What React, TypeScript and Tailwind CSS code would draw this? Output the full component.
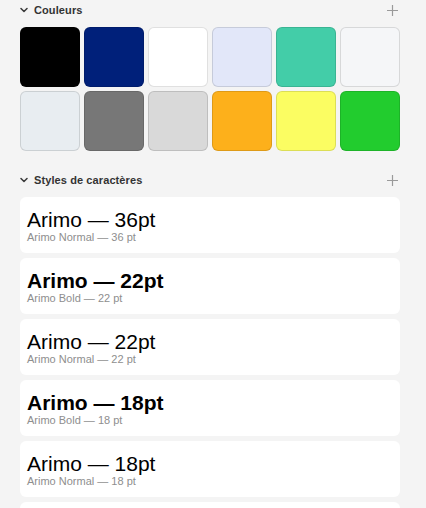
const swatches = [
  "#000000",
  "#00207a",
  "#ffffff",
  "#e2e7f9",
  "#43cda8",
  "#f5f6f8",
  "#e8edf1",
  "#777777",
  "#d9d9d9",
  "#fdb01b",
  "#fbfd62",
  "#22cc2e",
];

const textStyles = [
  { size: 36, bold: false },
  { size: 22, bold: true },
  { size: 22, bold: false },
  { size: 18, bold: true },
  { size: 18, bold: false },
  { size: 16, bold: true },
];

function Chevron() {
  return (
    <svg width="8" height="6" viewBox="0 0 8 6" fill="none">
      <path d="M1 1.5 L4 4.5 L7 1.5" stroke="#3a3a3a" strokeWidth="1.5" strokeLinecap="round" strokeLinejoin="round" />
    </svg>
  );
}

function Plus() {
  return (
    <svg width="11" height="11" viewBox="0 0 11 11" fill="none">
      <path d="M5.5 0 V11 M0 5.5 H11" stroke="#9a9a9a" strokeWidth="1.2" />
    </svg>
  );
}

function SectionHeader({ title }: { title: string }) {
  return (
    <div className="flex h-5 items-center justify-between">
      <div className="flex items-center gap-[6px]">
        <span className="flex w-[8px] justify-center">
          <Chevron />
        </span>
        <span className="text-[11px] leading-none font-bold tracking-[0.1px] text-[#333333]">{title}</span>
      </div>
      <span className="mr-[2px] flex">
        <Plus />
      </span>
    </div>
  );
}

export default function App() {
  return (
    <div
      className="h-[508px] w-[426px] overflow-hidden bg-[#f4f4f4]"
      style={{ fontFamily: "'Liberation Sans', Arial, sans-serif" }}
    >
      <div className="ml-5 w-[380px]">
        <SectionHeader title="Couleurs" />
        <div className="mt-[7px] grid grid-cols-6 gap-1">
          {swatches.map((color, i) => (
            <div
              key={i}
              className="h-[60px] rounded-md border border-black/[0.12]"
              style={{ backgroundColor: color }}
            />
          ))}
        </div>

        <div className="mt-[19px]">
          <SectionHeader title="Styles de caractères" />
        </div>

        <div className="mt-[7px] flex flex-col gap-[5px]">
          {textStyles.map((s, i) => (
            <div key={i} className="h-[56px] shrink-0 rounded-md bg-white pt-[12px] pl-[7px]">
              <div className={`text-[21px] leading-[22px] text-black ${s.bold ? "font-bold" : "font-normal"}`}>
                Arimo — {s.size}pt
              </div>
              <div className="text-[11px] leading-[12px] text-[#8e8e8e]">
                Arimo {s.bold ? "Bold" : "Normal"} — {s.size} pt
              </div>
            </div>
          ))}
        </div>
      </div>
    </div>
  );
}
